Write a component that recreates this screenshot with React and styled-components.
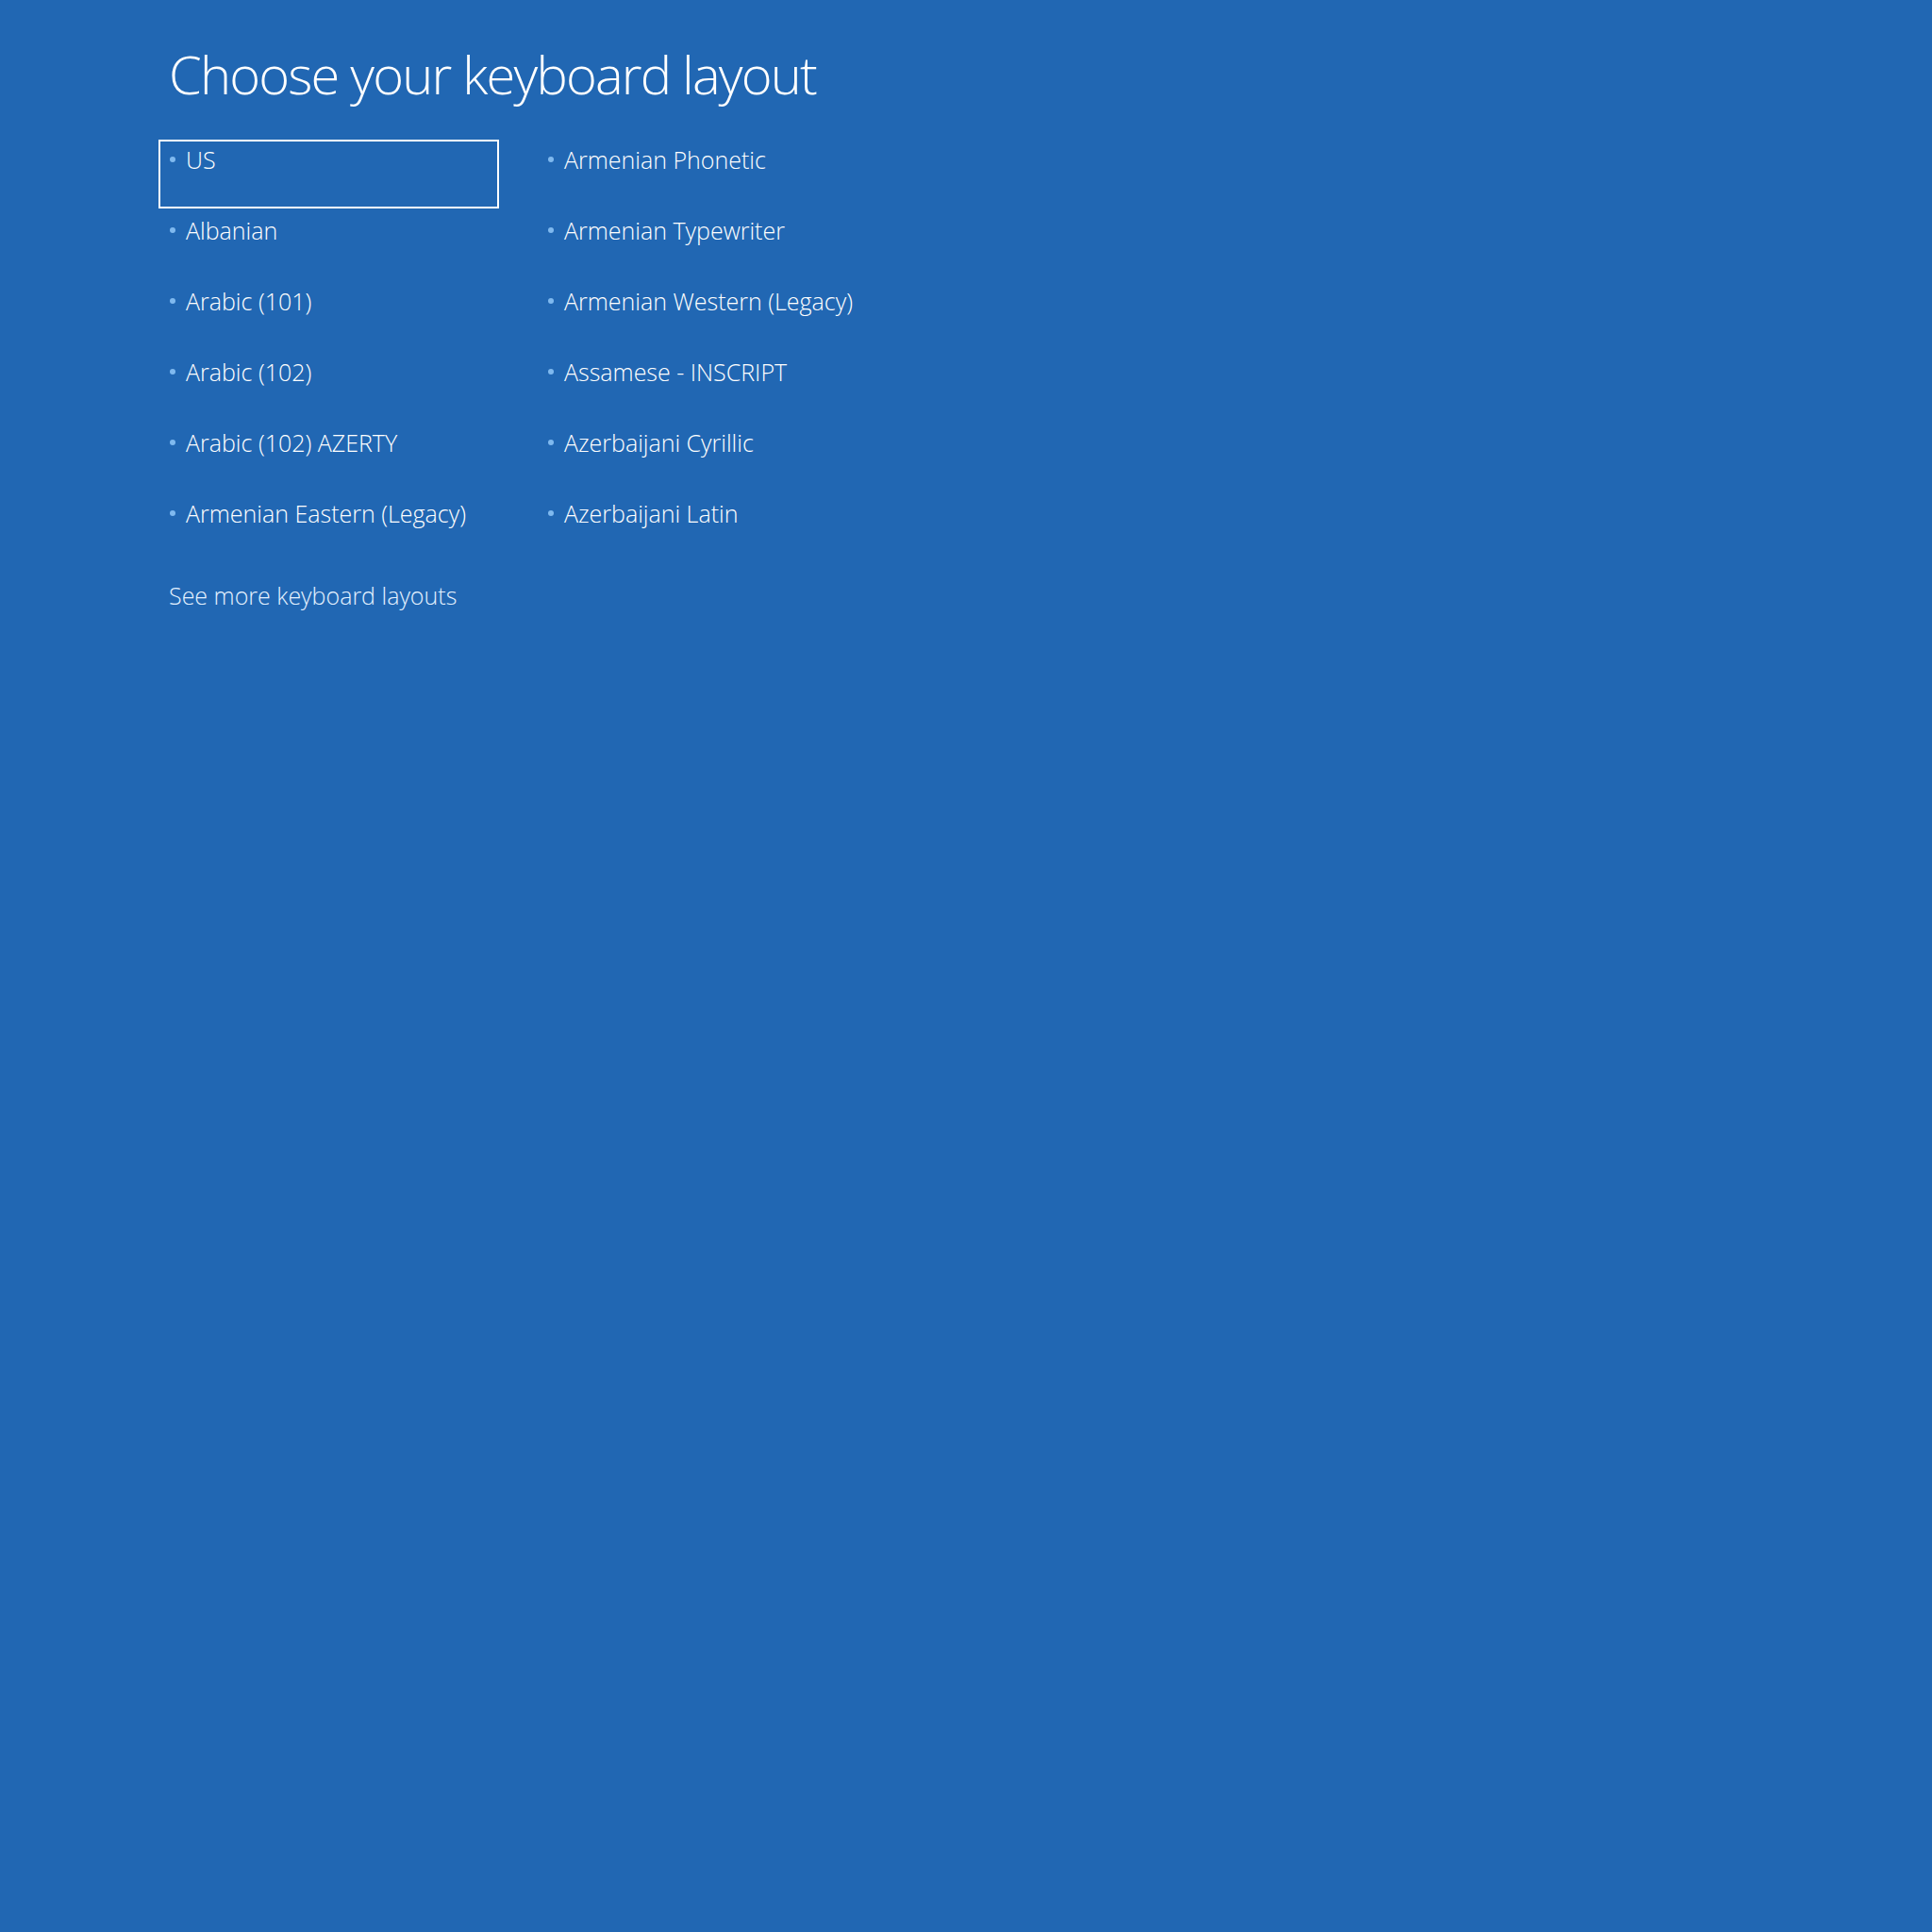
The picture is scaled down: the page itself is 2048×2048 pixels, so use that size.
import styled, { createGlobalStyle } from "styled-components";

const GlobalStyle = createGlobalStyle`
  html, body {
    margin: 0;
    padding: 0;
    background: #2167b3;
  }
  body {
    font-family: "Segoe UI", "Open Sans", "Noto Sans", sans-serif;
    color: #ffffff;
  }
`;

const Screen = styled.div`
  width: 2048px;
  height: 2048px;
  background: #2167b3;
  padding: 0 0 0 168px;
  box-sizing: border-box;
`;

const Title = styled.h1`
  margin: 0 0 0 11px;
  padding-top: 38px;
  font-size: 56px;
  font-weight: 300;
  line-height: 80px;
  height: 110px;
  letter-spacing: -1.8px;
`;

const Grid = styled.div`
  display: grid;
  grid-template-columns: repeat(2, 361px);
  grid-template-rows: repeat(6, 73px);
  grid-auto-flow: column;
  column-gap: 40px;
  row-gap: 2px;
`;

const Item = styled.div`
  display: flex;
  align-items: flex-start;
  box-sizing: border-box;
  padding: 2px 10px 0;
  border: 2px solid ${(p) => (p.$focused ? "#ffffff" : "transparent")};
  font-size: 25px;
  font-weight: 300;
  line-height: 34px;
  white-space: nowrap;
`;

const Bullet = styled.span`
  width: 6px;
  height: 6px;
  border-radius: 50%;
  background: #7fb9ef;
  margin: 14px 11px 0 0;
  flex: none;
`;

const MoreLink = styled.div`
  margin: 18px 0 0 11px;
  font-size: 25px;
  font-weight: 300;
  line-height: 34px;
  color: #e4f1ff;
`;

const layouts = [
  "US",
  "Albanian",
  "Arabic (101)",
  "Arabic (102)",
  "Arabic (102) AZERTY",
  "Armenian Eastern (Legacy)",
  "Armenian Phonetic",
  "Armenian Typewriter",
  "Armenian Western (Legacy)",
  "Assamese - INSCRIPT",
  "Azerbaijani Cyrillic",
  "Azerbaijani Latin",
];

export default function App() {
  return (
    <>
      <GlobalStyle />
      <Screen>
        <Title>Choose your keyboard layout</Title>
        <Grid>
          {layouts.map((name, i) => (
            <Item key={name} $focused={i === 0}>
              <Bullet />
              {name}
            </Item>
          ))}
        </Grid>
        <MoreLink>See more keyboard layouts</MoreLink>
      </Screen>
    </>
  );
}
